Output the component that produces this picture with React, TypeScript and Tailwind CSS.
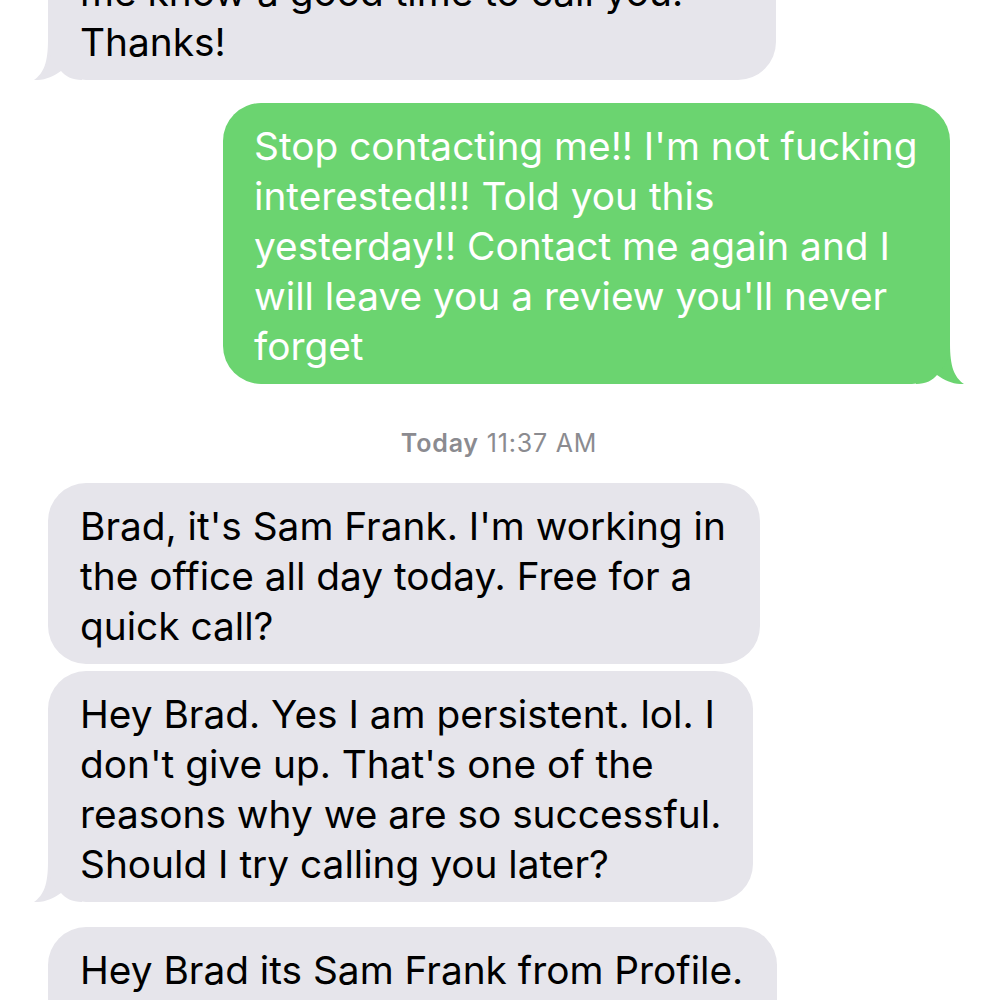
import React from "react";

const GRAY = "#e6e5eb";
const GREEN = "#6bd470";

function TailLeft({ color }: { color: string }) {
  return (
    <svg
      className="absolute bottom-0 left-[-16px]"
      width="50"
      height="40"
      viewBox="0 0 50 40"
    >
      <path
        d="M16 0 C16 22 12 33 2 40 C12 40.5 21 37 29 31 C33 36 40 40 50 40 L50 0 Z"
        fill={color}
      />
    </svg>
  );
}

function TailRight({ color }: { color: string }) {
  return (
    <svg
      className="absolute bottom-0 right-[-16px]"
      width="50"
      height="40"
      viewBox="0 0 50 40"
    >
      <g transform="translate(50 0) scale(-1 1)">
        <path
          d="M16 0 C16 22 12 33 2 40 C12 40.5 21 37 29 31 C33 36 40 40 50 40 L50 0 Z"
          fill={color}
        />
      </g>
    </svg>
  );
}

function Lines({ lines }: { lines: string[] }) {
  return (
    <>
      {lines.map((l, i) => (
        <div key={i} className="whitespace-nowrap">
          {l}
        </div>
      ))}
    </>
  );
}

function Received({
  lines,
  width,
  tail,
}: {
  lines: string[];
  width: string;
  tail?: boolean;
}) {
  return (
    <div className={`relative self-start ${width}`}>
      <div className="relative z-10 rounded-[38px] bg-[#e6e5eb] pl-[32px] pr-4 pt-[18px] pb-[13px] text-black">
        <Lines lines={lines} />
      </div>
      {tail && <TailLeft color={GRAY} />}
    </div>
  );
}

export default function App() {
  return (
    <div className="h-[1000px] w-[1000px] overflow-hidden bg-white">
      <div className="flex flex-col pl-[48px] pr-[50px] mt-[-51px] font-['Inter','Liberation_Sans',sans-serif] text-[38.8px] leading-[50px]">
        <Received
          width="w-[728px]"
          tail
          lines={["me know a good time to call you.", "Thanks!"]}
        />

        <div className="relative mt-[23px] self-end w-[727px]">
          <div className="relative z-10 rounded-[38px] bg-[#6bd470] pl-[31px] pr-4 pt-[18px] pb-[13px] text-white">
            <Lines
              lines={[
                "Stop contacting me!! I'm not fucking",
                "interested!!! Told you this",
                "yesterday!! Contact me again and I",
                "will leave you a review you'll never",
                "forget",
              ]}
            />
          </div>
          <TailRight color={GREEN} />
        </div>

        <div className="mt-[44px] mb-[25px] text-center text-[25px] tracking-[0.8px] leading-[30px] text-[#8b8b90]">
          <span className="font-semibold">Today</span> 11:37 AM
        </div>

        <Received
          width="w-[712px]"
          lines={[
            "Brad, it's Sam Frank. I'm working in",
            "the office all day today. Free for a",
            "quick call?",
          ]}
        />
        <div className="h-[7px]" />
        <Received
          width="w-[705px]"
          tail
          lines={[
            "Hey Brad. Yes I am persistent. lol. I",
            "don't give up. That's one of the",
            "reasons why we are so successful.",
            "Should I try calling you later?",
          ]}
        />
        <div className="h-[25px]" />
        <Received
          width="w-[729px]"
          lines={[
            "Hey Brad its Sam Frank from Profile.",
            "I'm in the office today. Let me know",
          ]}
        />
      </div>
    </div>
  );
}
